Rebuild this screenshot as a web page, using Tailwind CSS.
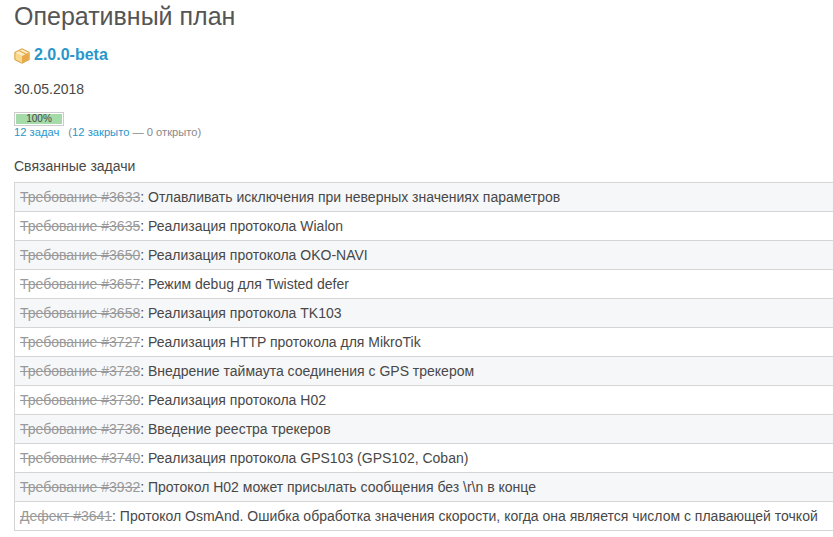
<!DOCTYPE html>
<html lang="ru">
<head>
    <meta charset="UTF-8">
    <title>Оперативный план</title>
    <script src="https://cdn.jsdelivr.net/npm/@tailwindcss/browser@4"></script>
</head>
<body class="bg-white overflow-hidden font-['Liberation_Sans',sans-serif] text-[#484848] text-sm">
    <div class="pl-[14px] w-[833px] h-[537px] overflow-hidden">
        <h2 class="text-[25px] leading-[28px] text-[#555] mt-[2px]">Оперативный план</h2>

        <h3 class="flex items-center mt-[13px] h-[24px] text-base font-bold text-[#2996cc]">
            <svg class="w-4 h-4 mr-1 mt-[2px]" viewBox="0 0 16 16">
                <path d="M8 .7 15.2 4.3v7.4L8 15.3.8 11.7V4.3z" fill="#eebc62" stroke="#d9a650" stroke-width="1" stroke-linejoin="round"/>
                <path d="M1.6 4.8 8 8v6.400l-6.400-3.200z" fill="#f8d98e"/>
                <path d="M8 8l6.400-3.200v6.400L8 14.400z" fill="#e8a94a"/>
                <path d="M1.600 4.800 8 1.600l6.400 3.200L8 8z" fill="#fdeec4"/>
                <path d="M4.600 3.100 11 6.300v2.300l1.300-.7V5.600L6 2.400z" fill="#e2ab58"/>
            </svg>
            <a href="#">2.0.0-beta</a>
        </h3>

        <p class="mt-[12px] leading-[20px]">30.05.2018</p>

        <div class="mt-[13px] w-[50px] h-[14px] border border-[#ccc] p-px bg-white">
            <div class="h-[10px] bg-[#a5dba8] text-[10px] leading-[10px] text-center text-[#484848]">100%</div>
        </div>
        <p class="text-[11.2px] leading-[12px] text-[#888]">
            <a href="#" class="text-[#2996cc]">12 задач</a>
            <span class="ml-[6px]">(<a href="#" class="text-[#2996cc]">12 закрыто</a> — 0 открыто)</span>
        </p>

        <h3 class="mt-[19px] leading-[18px] text-[#484848]">Связанные задачи</h3>

        <div class="mt-[7px] w-[840px] border-t border-l border-[#d5d5d5]">
            <div class="h-[29px] leading-[28px] pl-[5px] border-b border-[#d5d5d5] bg-[#f6f7f8]"><a href="#" class="line-through text-[#999]">Требование #3633</a>: Отлавливать исключения при неверных значениях параметров</div>
            <div class="h-[29px] leading-[28px] pl-[5px] border-b border-[#d5d5d5] bg-white"><a href="#" class="line-through text-[#999]">Требование #3635</a>: Реализация протокола Wialon</div>
            <div class="h-[29px] leading-[28px] pl-[5px] border-b border-[#d5d5d5] bg-[#f6f7f8]"><a href="#" class="line-through text-[#999]">Требование #3650</a>: Реализация протокола OKO-NAVI</div>
            <div class="h-[29px] leading-[28px] pl-[5px] border-b border-[#d5d5d5] bg-white"><a href="#" class="line-through text-[#999]">Требование #3657</a>: Режим debug для Twisted defer</div>
            <div class="h-[29px] leading-[28px] pl-[5px] border-b border-[#d5d5d5] bg-[#f6f7f8]"><a href="#" class="line-through text-[#999]">Требование #3658</a>: Реализация протокола TK103</div>
            <div class="h-[29px] leading-[28px] pl-[5px] border-b border-[#d5d5d5] bg-white"><a href="#" class="line-through text-[#999]">Требование #3727</a>: Реализация HTTP протокола для MikroTik</div>
            <div class="h-[29px] leading-[28px] pl-[5px] border-b border-[#d5d5d5] bg-[#f6f7f8]"><a href="#" class="line-through text-[#999]">Требование #3728</a>: Внедрение таймаута соединения с GPS трекером</div>
            <div class="h-[29px] leading-[28px] pl-[5px] border-b border-[#d5d5d5] bg-white"><a href="#" class="line-through text-[#999]">Требование #3730</a>: Реализация протокола H02</div>
            <div class="h-[29px] leading-[28px] pl-[5px] border-b border-[#d5d5d5] bg-[#f6f7f8]"><a href="#" class="line-through text-[#999]">Требование #3736</a>: Введение реестра трекеров</div>
            <div class="h-[29px] leading-[28px] pl-[5px] border-b border-[#d5d5d5] bg-white"><a href="#" class="line-through text-[#999]">Требование #3740</a>: Реализация протокола GPS103 (GPS102, Coban)</div>
            <div class="h-[29px] leading-[28px] pl-[5px] border-b border-[#d5d5d5] bg-[#f6f7f8]"><a href="#" class="line-through text-[#999]">Требование #3932</a>: Протокол H02 может присылать сообщения без \r\n в конце</div>
            <div class="h-[29px] leading-[28px] pl-[5px] border-b border-[#d5d5d5] bg-white"><a href="#" class="line-through text-[#999]">Дефект #3641</a>: Протокол OsmAnd. Ошибка обработка значения скорости, когда она является числом с плавающей точкой</div>
        </div>
    </div>
</body>
</html>
